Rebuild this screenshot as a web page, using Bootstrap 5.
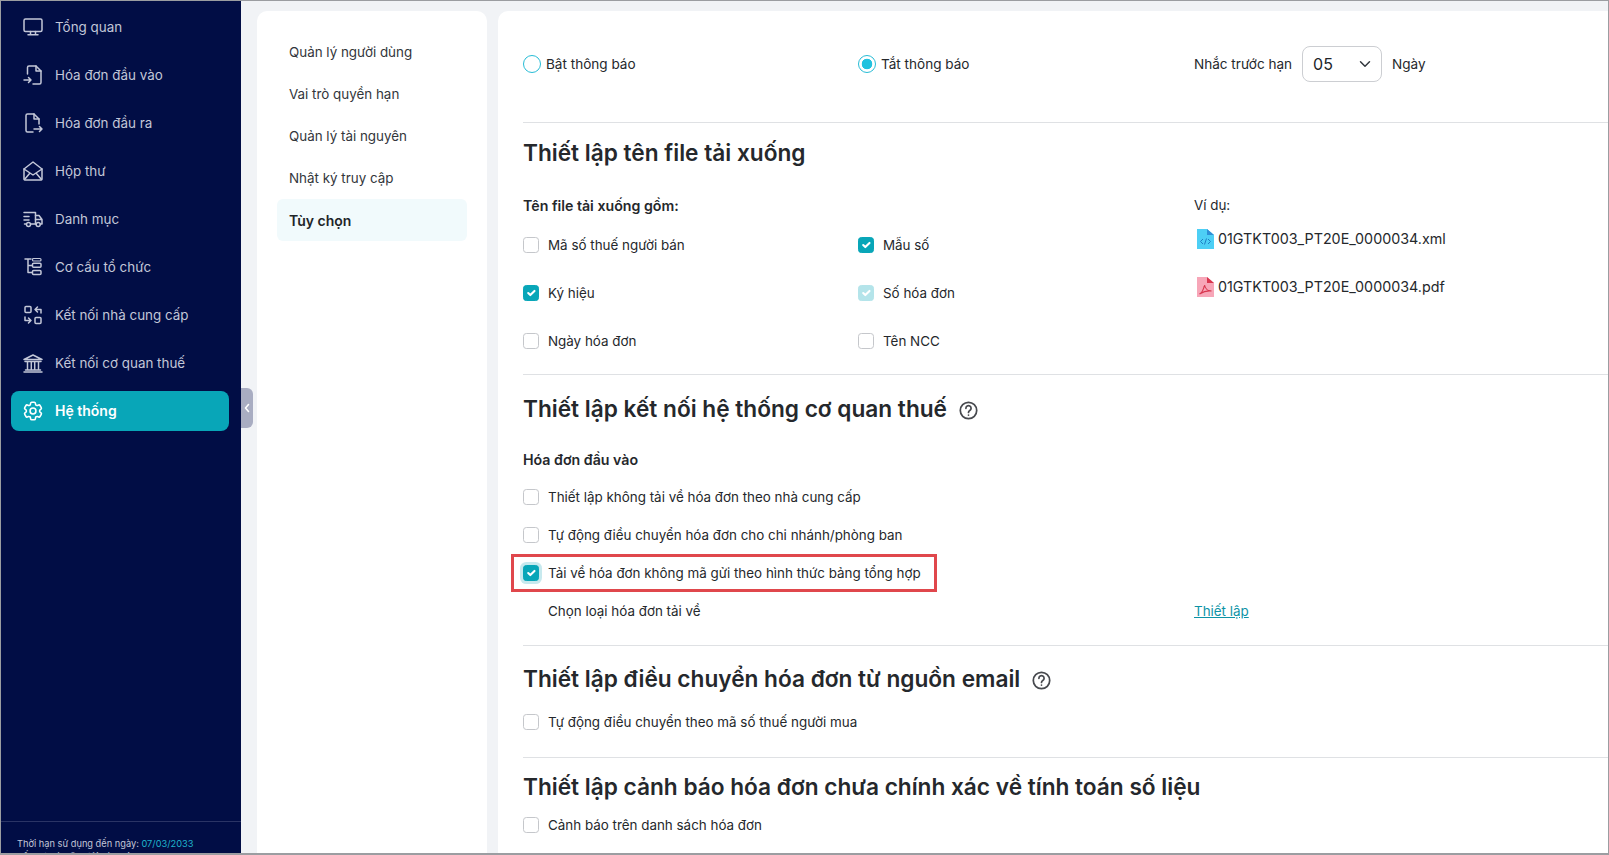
<!DOCTYPE html>
<html lang="vi">
<head>
  <meta charset="UTF-8" />
  <title>Tùy chọn</title>
  <link href="https://cdn.jsdelivr.net/npm/bootstrap@5.3.3/dist/css/bootstrap.min.css" rel="stylesheet" />
  <style>
    html, body { height: 100%; overflow: hidden; }
    body { font-family: Inter, "Liberation Sans", sans-serif; font-size: 13.4px; color: #25282c; background: #f1f3f6; }
    .app-frame { height: 855px; border: solid #9b9da1; border-width: 1px 1px 2px 1px; overflow: hidden; }

    /* sidebar */
    .side-bar { width: 240px; background: #010d45; color: #c3c7d8; position: relative; }
    .side-menu { padding-top: 2px; }
    .side-item { height: 48px; padding-left: 22px; gap: 12px; color: #c3c7d8; text-decoration: none; }
    .side-item svg { width: 20px; height: 20px; flex: none; }
    .side-item.active-item { height: 40px; margin: 4px 12px 4px 10px; padding: 0 0 1px 12px; border-radius: 8px; background: #08a6b8; color: #fff; font-weight: 600; font-size: 14px; }
    .side-foot { margin-top: auto; height: 32px; border-top: 1px solid #2a3465; padding: 16px 0 0 16px; font-size: 9.25px; line-height: 12.5px; white-space: nowrap; }
    .side-foot span { color: #1fb4cc; }
    .side-toggle { position: absolute; left: 240px; top: 387px; width: 12px; height: 40px; background: #a9adc2; border-radius: 0 6px 6px 0; }
    .side-toggle svg { width: 8px; height: 10px; }

    /* second column */
    .sub-panel { width: 230px; margin: 10px 0 0 16px; padding: 20px 20px 0; background: #fff; border-radius: 10px 10px 0 0; }
    .sub-item { height: 42px; padding-left: 12px; color: #33363b; text-decoration: none; }
    .sub-item.active-item { background: #f1fafc; border-radius: 6px; font-weight: 600; font-size: 14px; color: #212529; }

    /* main column */
    .main-panel { margin: 10px 0 0 11px; padding-left: 25px; background: #fff; border-radius: 10px 0 0 0; }
    .main-panel hr { margin: 0; border-color: #dfe1e4; opacity: 1; }
    .opt-grid { display: grid; grid-template-columns: 335px 336px 1fr; }
    .top-row { height: 111px; padding-top: 35px; align-items: start; font-size: 13.55px; }
    .top-row > div { height: 36px; }
    .opt-head { font-size: 22.65px; line-height: 32px; font-weight: 600; color: #25282c; margin: 0; }
    .opt-head svg { width: 19px; height: 19px; margin-left: 6px; vertical-align: -3px; }
    .head-1 { padding: 14px 0 0; }
    .head-2 { padding: 18px 0 0; }
    .head-3 { padding: 17px 0 8px; }
    .head-4 { padding: 13px 0 3px; }
    .opt-label { font-weight: 600; font-size: 14.2px; }
    .label-1 { margin-top: 21px; height: 31px; }
    .label-2 { margin-top: 16px; height: 37px; }
    .row-48 { height: 48px; }
    .row-38 { height: 38px; }
    .form-check-input { width: 16px; height: 16px; margin: 0; flex: none; border: 1.5px solid #c5c7cb; border-radius: 4px; }
    .form-check-input:checked { background-color: #08a6b8; border-color: #08a6b8; }
    .form-check-input:disabled { opacity: 1; }
    .form-check-input:checked:disabled { background-color: #b4e4ea; border-color: #b4e4ea; }
    .form-check-input.ring-on { box-shadow: 0 0 0 3px #c7e9ee; }
    .form-check-input[type=radio] { width: 18px; height: 18px; border: 1px solid #27bcd6; border-radius: 50%; }
    .form-check-input[type=radio]:checked { background: #fff radial-gradient(circle, #22c2df 0 5px, #fff 5.6px); border-color: #27bcd6; box-shadow: none; }
    .opt-check { gap: 9px; }
    .opt-check label { margin: 0; }
    .opt-radio { gap: 5px; }
    .num-select { width: 80px; height: 36px; font-size: 16px; padding: 0 24px 0 10px; border-color: #ccced2; border-radius: 8px; color: #212529; background-position: right 8px center; margin: 0 10px 0 10px; }
    .file-line { height: 48px; gap: 4px; padding-left: 3px; font-size: 14.3px; }
    .file-line svg { width: 17px; height: 20px; }
    .file-list { margin-top: -6px; }
    .opt-link { color: #0d93a6; text-decoration: underline; }
    .mark-box { position: absolute; left: -12px; top: 0; width: 426px; height: 38px; border: 3px solid #e0474c; pointer-events: none; }
    .sub-line { padding-left: 25px; }
    .hr-9 { margin-top: 9px !important; }
    .hr-15 { margin-top: 15px !important; }
    .hr-16 { margin-top: 16px !important; }
  </style>
</head>
<body>
<div class="app-frame d-flex">
  <aside class="side-bar d-flex flex-column flex-shrink-0">
    <nav class="side-menu d-flex flex-column">
      <a class="side-item d-flex align-items-center" href="#">
        <svg viewBox="0 0 20 20" fill="none" stroke="currentColor" stroke-width="1.5" stroke-linejoin="round" stroke-linecap="round"><rect x="1" y="2" width="18" height="12.5" rx="1.5"/><path d="M7.5 14.5v3M12.5 14.5v3M5 17.8h10"/></svg>Tổng quan</a>
      <a class="side-item d-flex align-items-center" href="#">
        <svg viewBox="0 0 20 20" fill="none" stroke="currentColor" stroke-width="1.5" stroke-linejoin="round" stroke-linecap="round"><path d="M4.5 9V2.5A1.5 1.5 0 0 1 6 1h7l5 5v11.5a1.5 1.5 0 0 1-1.5 1.5H10"/><path d="M13 1v5h5"/><path d="M1 15h7M5.5 12.5 8 15l-2.5 2.5"/></svg>Hóa đơn đầu vào</a>
      <a class="side-item d-flex align-items-center" href="#">
        <svg viewBox="0 0 20 20" fill="none" stroke="currentColor" stroke-width="1.5" stroke-linejoin="round" stroke-linecap="round"><path d="M10 19H4.5A1.5 1.5 0 0 1 3 17.5v-15A1.5 1.5 0 0 1 4.5 1H11l5 5v5"/><path d="M11 1v5h5"/><path d="M11 16h8M16.5 13.5 19 16l-2.500 2.500"/></svg>Hóa đơn đầu ra</a>
      <a class="side-item d-flex align-items-center" href="#">
        <svg viewBox="0 0 20 20" fill="none" stroke="currentColor" stroke-width="1.5" stroke-linejoin="round" stroke-linecap="round"><path d="M1 8 10 1l9 7v10a1 1 0 0 1-1 1H2a1 1 0 0 1-1-1z"/><path d="m1 8 9 6 9-6M1.500 18.500 7 12M18.500 18.500 13 12"/></svg>Hộp thư</a>
      <a class="side-item d-flex align-items-center" href="#">
        <svg viewBox="0 0 20 20" fill="none" stroke="currentColor" stroke-width="1.5" stroke-linejoin="round" stroke-linecap="round"><path d="M1 3.500h11.500V15H8M3 15H1.500M1 7.500h5M1 11h5"/><path d="M12.500 6.500H16l3 4V15h-1.500M12.500 15H13M12.500 10.500H19"/><circle cx="5.500" cy="15.500" r="2"/><circle cx="15.200" cy="15.500" r="2"/></svg>Danh mục</a>
      <a class="side-item d-flex align-items-center" href="#">
        <svg viewBox="0 0 20 20" fill="none" stroke="currentColor" stroke-width="1.5" stroke-linejoin="round" stroke-linecap="round"><path d="M2 2h6M5 2v13.500h4M5 8.500h4"/><rect x="9.500" y="6.200" width="8.500" height="4" rx="1"/><rect x="9.500" y="13.500" width="8.500" height="4" rx="1"/><rect x="9.500" y="1.500" width="8.500" height="2.500" rx="1" stroke-width="1.200"/></svg>Cơ cấu tổ chức</a>
      <a class="side-item d-flex align-items-center" href="#">
        <svg viewBox="0 0 20 20" fill="none" stroke="currentColor" stroke-width="1.5" stroke-linejoin="round" stroke-linecap="round"><rect x="2" y="1.500" width="6" height="6" rx="1"/><rect x="12" y="12.500" width="6" height="6" rx="1"/><path d="M18 8V4.500h-6M14.500 2 12 4.500 14.500 7M2 12v3.500h6M5.500 13 8 15.500 5.500 18"/></svg>Kết nối nhà cung cấp</a>
      <a class="side-item d-flex align-items-center" href="#">
        <svg viewBox="0 0 20 20" fill="none" stroke="currentColor" stroke-width="1.5" stroke-linejoin="round" stroke-linecap="round"><path d="M1 6.500 10 2l9 4.500zM2 8.500h16M4.500 9v8M8.300 9v8M11.700 9v8M15.500 9v8M2.500 17h15M1 19h18"/></svg>Kết nối cơ quan thuế</a>
      <a class="side-item active-item d-flex align-items-center" href="#">
        <svg viewBox="1.800 1.800 20.400 20.400" fill="none" stroke="currentColor" stroke-width="1.600" stroke-linejoin="round" stroke-linecap="round"><path d="M9.594 3.940c.09-.542.56-.94 1.110-.94h2.593c.55 0 1.020.398 1.110.94l.213 1.281c.063.374.313.686.645.870.074.040.147.083.22.127.325.196.72.257 1.075.124l1.217-.456a1.125 1.125 0 0 1 1.370.49l1.296 2.247a1.125 1.125 0 0 1-.26 1.431l-1.003.827c-.293.241-.438.613-.43.992a7.723 7.723 0 0 1 0 .255c-.008.378.137.75.43.991l1.004.827c.424.35.534.955.26 1.430l-1.298 2.247a1.125 1.125 0 0 1-1.369.491l-1.217-.456c-.355-.133-.75-.072-1.076.124a6.470 6.470 0 0 1-.22.128c-.331.183-.581.495-.644.869l-.213 1.281c-.09.543-.56.94-1.110.94h-2.594c-.55 0-1.019-.398-1.110-.94l-.213-1.281c-.062-.374-.312-.686-.644-.87a6.520 6.520 0 0 1-.22-.127c-.325-.196-.72-.257-1.076-.124l-1.217.456a1.125 1.125 0 0 1-1.369-.49l-1.297-2.247a1.125 1.125 0 0 1 .26-1.431l1.004-.827c.292-.24.437-.613.43-.991a6.932 6.932 0 0 1 0-.255c.007-.38-.138-.751-.43-.992l-1.004-.827a1.125 1.125 0 0 1-.26-1.430l1.297-2.247a1.125 1.125 0 0 1 1.370-.491l1.216.456c.356.133.751.072 1.076-.124.072-.044.146-.086.22-.128.332-.183.582-.495.644-.869l.214-1.280Z"/><circle cx="12" cy="12" r="3"/></svg>Hệ thống</a>
    </nav>
    <div class="side-foot">Thời hạn sử dụng đến ngày: <span>07/03/2033</span><br />Số lượt hóa đơn tải còn lại: <span>994.581</span></div>
    <div class="side-toggle d-flex align-items-center justify-content-center">
      <svg viewBox="0 0 8 10" fill="none" stroke="#fff" stroke-width="1.600" stroke-linecap="round" stroke-linejoin="round"><path d="M5.500 1.500 2.500 5l3 3.500"/></svg>
    </div>
  </aside>

  <div class="sub-panel flex-shrink-0">
    <a class="sub-item d-flex align-items-center" href="#">Quản lý người dùng</a>
    <a class="sub-item d-flex align-items-center" href="#">Vai trò quyền hạn</a>
    <a class="sub-item d-flex align-items-center" href="#">Quản lý tài nguyên</a>
    <a class="sub-item d-flex align-items-center" href="#">Nhật ký truy cập</a>
    <a class="sub-item active-item d-flex align-items-center" href="#">Tùy chọn</a>
  </div>

  <main class="main-panel flex-grow-1">
    <div class="opt-grid top-row">
      <div class="d-flex align-items-center opt-radio"><input class="form-check-input" type="radio" name="notify" id="r1" /><label for="r1">Bật thông báo</label></div>
      <div class="d-flex align-items-center opt-radio"><input class="form-check-input" type="radio" name="notify" id="r2" checked /><label for="r2">Tắt thông báo</label></div>
      <div class="d-flex align-items-center">Nhắc trước hạn
        <select class="form-select num-select"><option>05</option></select>Ngày</div>
    </div>
    <hr />

    <h2 class="opt-head head-1">Thiết lập tên file tải xuống</h2>
    <div class="opt-grid label-1">
      <div class="opt-label d-flex align-items-center">Tên file tải xuống gồm:</div>
      <div></div>
      <div class="d-flex align-items-center">Ví dụ:</div>
    </div>
    <div class="opt-grid">
      <div class="row-48 d-flex align-items-center opt-check"><input class="form-check-input" type="checkbox" id="c1" /><label for="c1">Mã số thuế người bán</label></div>
      <div class="row-48 d-flex align-items-center opt-check"><input class="form-check-input" type="checkbox" id="c2" checked /><label for="c2">Mẫu số</label></div>
      <div class="file-list" style="grid-row: span 3">
        <div class="file-line d-flex align-items-center">
          <svg viewBox="0 0 17 20"><path fill="#4dcff5" d="M0 0h10l7 6v14H0z"/><path fill="#2e8fd6" d="M10 0l7 6h-7z"/><path fill="none" stroke="#1f7fc4" stroke-width="1" d="M6 10l-2.500 2.500L6 15M11 10l2.500 2.500L11 15M9.500 9.500l-2 6"/></svg>01GTKT003_PT20E_0000034.xml</div>
        <div class="file-line d-flex align-items-center">
          <svg viewBox="0 0 17 20"><path fill="#f7a6b8" d="M0 0h10l7 6v14H0z"/><path fill="#d8364f" d="M10 0l7 6h-7z"/><path fill="none" stroke="#d8364f" stroke-width="1.200" d="M2.500 17c2-1 4-4 5-9 .500 3 3 6 7 6-3-.500-8 .500-12 3z"/></svg>01GTKT003_PT20E_0000034.pdf</div>
      </div>
      <div class="row-48 d-flex align-items-center opt-check"><input class="form-check-input" type="checkbox" id="c3" checked /><label for="c3">Ký hiệu</label></div>
      <div class="row-48 d-flex align-items-center opt-check"><input class="form-check-input" type="checkbox" id="c4" checked disabled /><label for="c4">Số hóa đơn</label></div>
      <div class="row-48 d-flex align-items-center opt-check"><input class="form-check-input" type="checkbox" id="c5" /><label for="c5">Ngày hóa đơn</label></div>
      <div class="row-48 d-flex align-items-center opt-check"><input class="form-check-input" type="checkbox" id="c6" /><label for="c6">Tên NCC</label></div>
    </div>
    <hr class="hr-9" />

    <h2 class="opt-head head-2">Thiết lập kết nối hệ thống cơ quan thuế
      <svg viewBox="0 0 22 22" fill="none" stroke="#47494e" stroke-width="2" stroke-linecap="round"><circle cx="11" cy="11" r="9.500"/><path d="M8 8.500a3 3 0 1 1 4.500 2.600c-1 .600-1.500 1.200-1.500 2.200"/><path d="M11 16.200v.100"/></svg></h2>
    <div class="opt-label label-2 d-flex align-items-center">Hóa đơn đầu vào</div>
    <div class="row-38 d-flex align-items-center opt-check"><input class="form-check-input" type="checkbox" id="c7" /><label for="c7">Thiết lập không tải về hóa đơn theo nhà cung cấp</label></div>
    <div class="row-38 d-flex align-items-center opt-check"><input class="form-check-input" type="checkbox" id="c8" /><label for="c8">Tự động điều chuyển hóa đơn cho chi nhánh/phòng ban</label></div>
    <div class="row-38 d-flex align-items-center opt-check position-relative"><input class="form-check-input ring-on" type="checkbox" id="c9" checked /><label for="c9">Tải về hóa đơn không mã gửi theo hình thức bảng tổng hợp</label><div class="mark-box"></div></div>
    <div class="opt-grid row-38 align-items-center">
      <div class="sub-line" style="grid-column: span 2">Chọn loại hóa đơn tải về</div>
      <a class="opt-link" href="#">Thiết lập</a>
    </div>
    <hr class="hr-15" />

    <h2 class="opt-head head-3">Thiết lập điều chuyển hóa đơn từ nguồn email
      <svg viewBox="0 0 22 22" fill="none" stroke="#47494e" stroke-width="2" stroke-linecap="round"><circle cx="11" cy="11" r="9.500"/><path d="M8 8.500a3 3 0 1 1 4.500 2.600c-1 .600-1.500 1.200-1.500 2.200"/><path d="M11 16.200v.100"/></svg></h2>
    <div class="row-38 d-flex align-items-center opt-check"><input class="form-check-input" type="checkbox" id="c10" /><label for="c10">Tự động điều chuyển theo mã số thuế người mua</label></div>
    <hr class="hr-16" />

    <h2 class="opt-head head-4">Thiết lập cảnh báo hóa đơn chưa chính xác về tính toán số liệu</h2>
    <div class="row-38 d-flex align-items-center opt-check"><input class="form-check-input" type="checkbox" id="c11" /><label for="c11">Cảnh báo trên danh sách hóa đơn</label></div>
  </main>
</div>
<script src="https://cdn.jsdelivr.net/npm/bootstrap@5.3.3/dist/js/bootstrap.bundle.min.js"></script>
</body>
</html>
